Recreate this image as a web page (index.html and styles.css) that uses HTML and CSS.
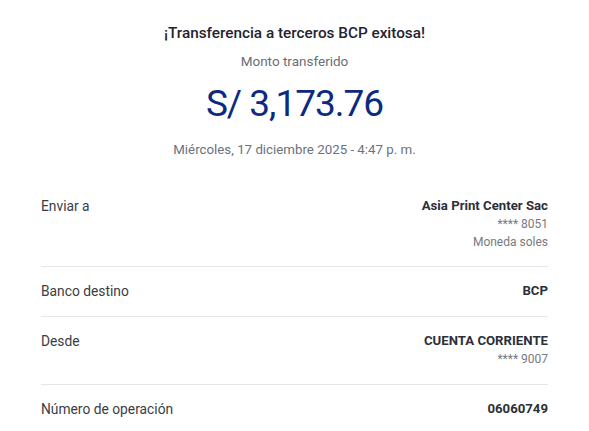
FILE: index.html
```html
<!DOCTYPE html>
<html lang="es">
<head>
<meta charset="utf-8">
<title>Transferencia exitosa</title>
<link rel="stylesheet" href="styles.css">
</head>
<body>
<main class="receipt">
  <header class="summary">
    <h1 class="title">¡Transferencia a terceros BCP exitosa!</h1>
    <p class="subtitle">Monto transferido</p>
    <p class="amount">S/ 3,173.76</p>
    <p class="date">Miércoles, 17 diciembre 2025 - 4:47 p. m.</p>
  </header>
  <section class="details">
    <div class="row">
      <span class="label">Enviar a</span>
      <div class="value">
        <span class="strong">Asia Print Center Sac</span>
        <span class="muted">**** 8051</span>
        <span class="muted">Moneda soles</span>
      </div>
    </div>
    <div class="row">
      <span class="label">Banco destino</span>
      <div class="value"><span class="strong">BCP</span></div>
    </div>
    <div class="row">
      <span class="label">Desde</span>
      <div class="value">
        <span class="strong">CUENTA CORRIENTE</span>
        <span class="muted">**** 9007</span>
      </div>
    </div>
    <div class="row">
      <span class="label">Número de operación</span>
      <div class="value"><span class="strong">06060749</span></div>
    </div>
  </section>
</main>
</body>
</html>
```

FILE: styles.css
```css
* { box-sizing: border-box; }
html, body { margin: 0; padding: 0; background: #ffffff; }
body {
  font-family: Roboto, "Noto Sans", "Liberation Sans", sans-serif;
  color: #2b2f38;
}
.receipt {
  width: 589px;
  padding: 22px 41px 0 41px;
}
.summary {
  display: flex;
  flex-direction: column;
  align-items: center;
}
.title {
  margin: 0;
  font-size: 15.3px;
  font-weight: 500;
  line-height: 22px;
  color: #1f2430;
}
.subtitle {
  margin: 8px 0 0;
  font-size: 13.5px;
  line-height: 18px;
  color: #6b6e75;
}
.amount {
  margin: 11px 0 0;
  font-size: 37px;
  letter-spacing: -1px;
  font-weight: 400;
  line-height: 46px;
  color: #0c2a80;
}
.date {
  margin: 14px 0 0;
  font-size: 13.3px;
  line-height: 18px;
  color: #6b7280;
}
.details {
  margin-top: 38px;
}
.row {
  display: flex;
  justify-content: space-between;
  align-items: flex-start;
  padding: 15px 0 16px;
  border-bottom: 1px solid #e6e6e6;
}
.row:first-child { padding-top: 0; padding-bottom: 15px; }
.row:last-child { border-bottom: none; }
.label {
  font-size: 13.8px;
  line-height: 18px;
  color: #3a3d44;
}
.value {
  display: flex;
  flex-direction: column;
  align-items: flex-end;
  text-align: right;
}
.strong {
  font-size: 13.2px;
  line-height: 18px;
  font-weight: 700;
  color: #2b2f38;
}
.muted {
  font-size: 12px;
  line-height: 18px;
  color: #777a80;
}
```
